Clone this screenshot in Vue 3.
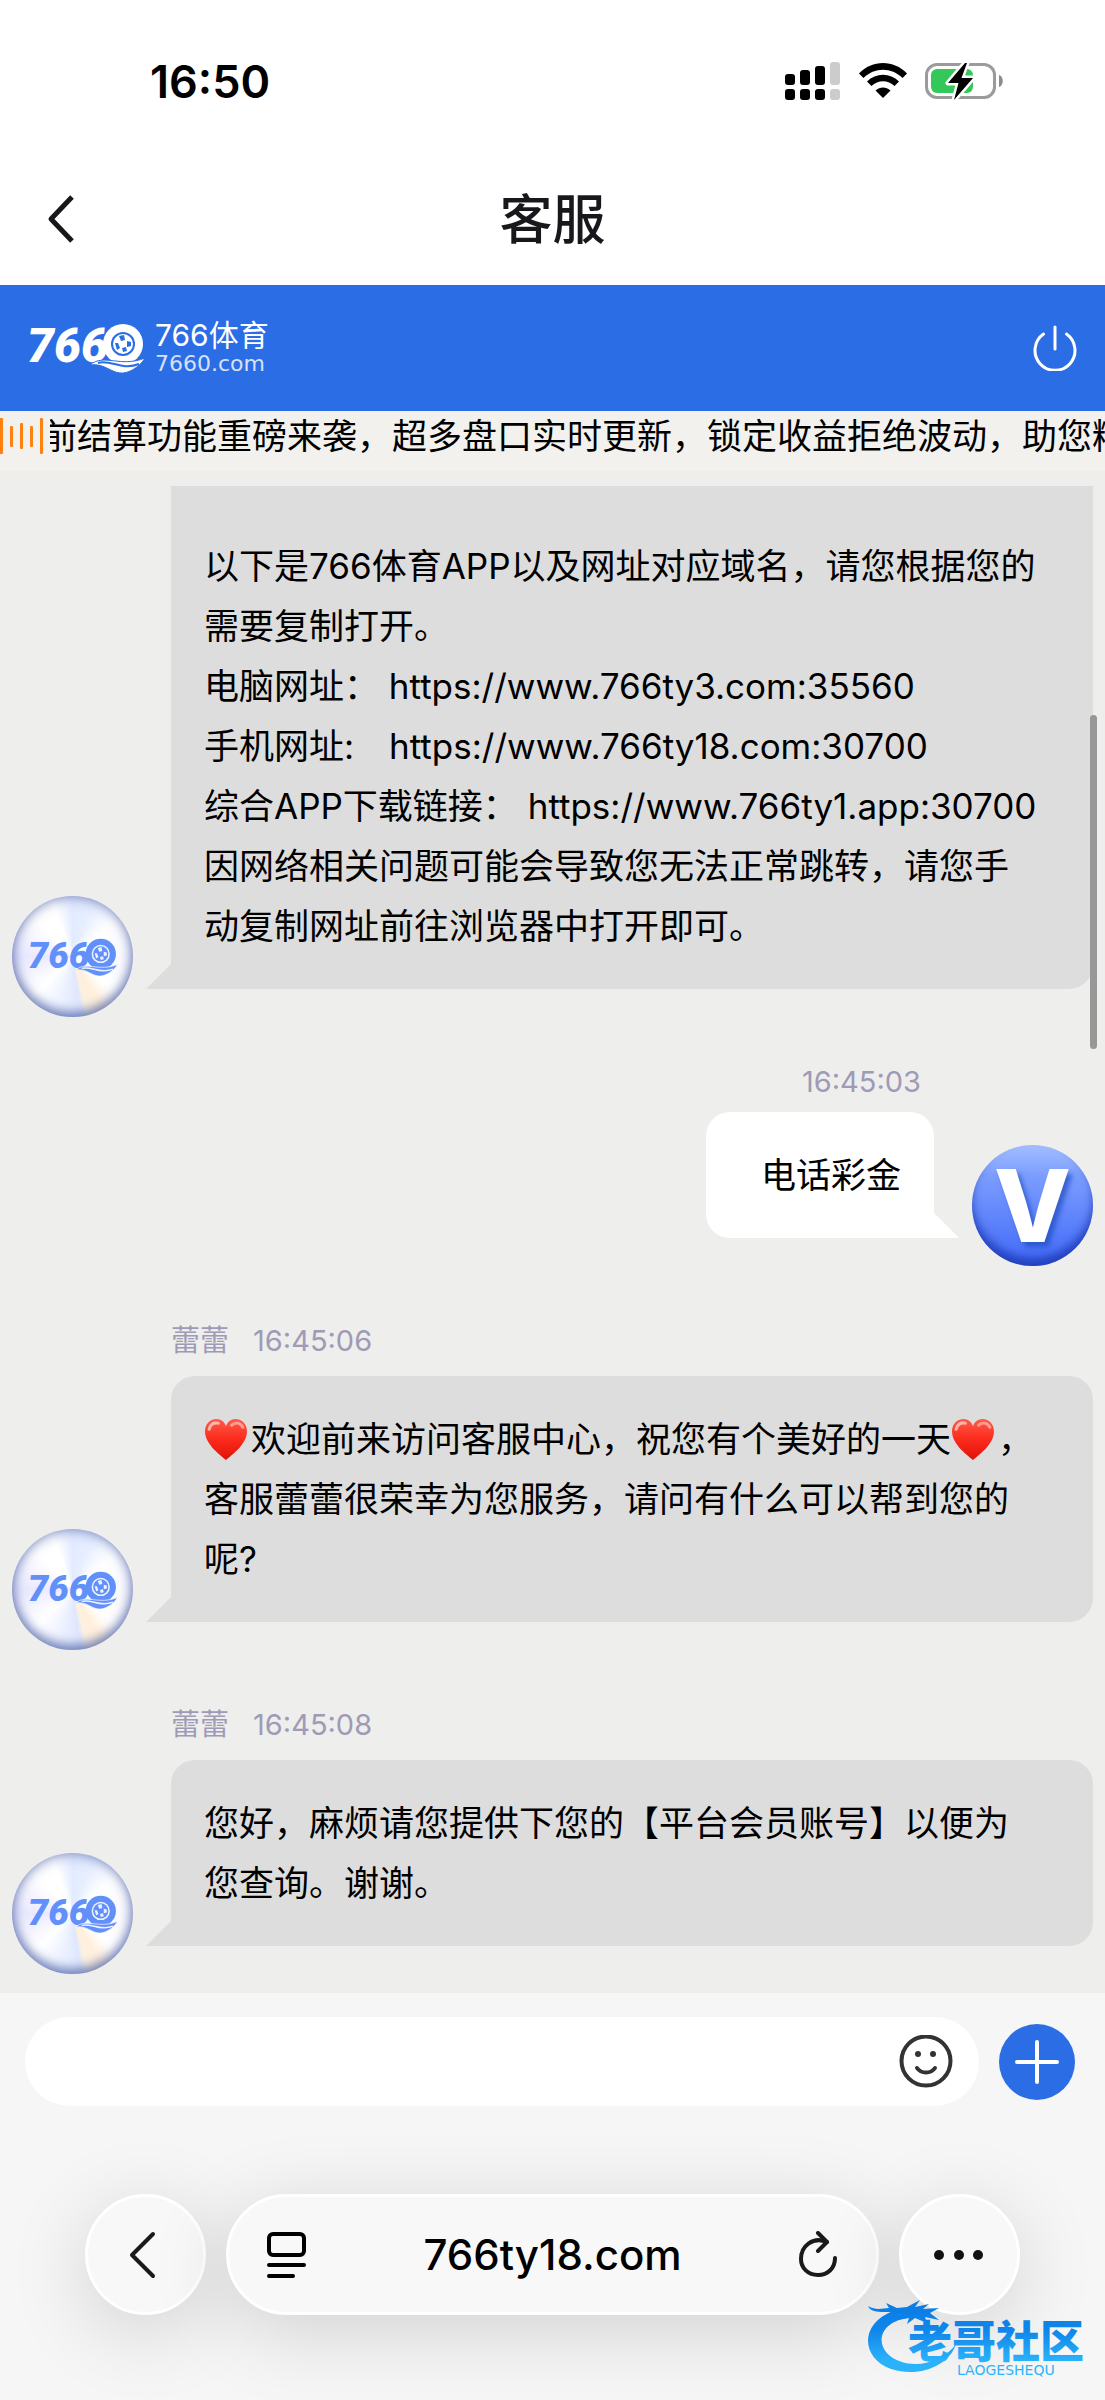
<template>
  <div class="phone">
    <svg class="defs" aria-hidden="true">
      <symbol id="heart" viewBox="0 0 43 42">
        <path fill="url(#heart-red)" d="M21.500 41C14 35 1 25 1 13C1 6 6 1 12 1C17 1 20 4 21.500 8C23 4 26 1 31 1C37 1 42 6 42 13C42 25 29 35 21.500 41Z" />
        <path d="M5 11C6 6 10 4 14 5" fill="none" stroke="#ffb5a8" stroke-width="3" stroke-linecap="round" />
        <path d="M27 7C31 3 36 5 38 9" fill="none" stroke="#ff9d90" stroke-width="3" stroke-linecap="round" />
      </symbol>
      <linearGradient id="heart-red" x1="0" y1="0" x2="0" y2="1">
        <stop offset="0" stop-color="#ff5a48" />
        <stop offset="0.5" stop-color="#fb2a1c" />
        <stop offset="1" stop-color="#e01208" />
      </linearGradient>
      <symbol id="ball-wave" viewBox="0 0 117 50">
        <circle class="mark-fill" cx="95" cy="21" r="20" />
        <circle class="mark-hole" cx="95" cy="21" r="12" />
        <circle class="mark-fill" cx="95" cy="21" r="10" />
        <path class="mark-hole" d="M91 13l5-1 1 5-4 1zM87 20l3 0 2 5-3 2zM99 18l4 1 0 4-4 1zM94 25l4-1 1 4-4 1z" />
        <path class="mark-wave" d="M62 42C76 30 92 45 117 35C112 44 100 51 92 50C82 49 76 40 62 42Z" />
        <path class="mark-line" d="M70 40C82 36 94 48 111 41" />
      </symbol>
    </svg>

    <div class="status-bar">
      <span class="clock">16:50</span>
      <div class="status-icons">
        <svg width="56" height="38" viewBox="0 0 56 38" aria-hidden="true">
          <rect x="0" y="12" width="10" height="11" rx="3" />
          <rect x="15" y="8" width="10" height="15" rx="3" />
          <rect x="30" y="4" width="10" height="19" rx="3" />
          <rect x="45" y="0" width="10" height="23" rx="3" fill="#ccc" />
          <rect x="0" y="27" width="10" height="11" rx="3" />
          <rect x="15" y="27" width="10" height="11" rx="3" />
          <rect x="30" y="27" width="10" height="11" rx="3" />
          <rect x="45" y="27" width="10" height="11" rx="3" fill="#ccc" />
        </svg>
        <svg width="48" height="36" viewBox="0 0 48 36" aria-hidden="true">
          <path d="M0 10.500C13-3.500 35-3.500 48 10.500L43.500 15C32.500 4 15.500 4 4.500 15Z" />
          <path d="M8 18.500C17 9.500 31 9.500 40 18.500L35.500 23C29 16.700 19 16.700 12.500 23Z" />
          <path d="M16.500 27.500C21 23.500 27 23.500 31.500 27.500L24 35Z" />
        </svg>
        <svg width="78" height="38" viewBox="0 0 78 38" aria-hidden="true">
          <rect x="1.500" y="2.500" width="68" height="33" rx="10.500" fill="none" stroke="#9b9b9b" stroke-width="3" />
          <path d="M74 13C79 14 79 24 74 25Z" fill="#8c8c8c" />
          <rect x="6" y="7" width="42" height="24" rx="6" fill="#34c759" />
          <path d="M40 1L23 21H33.500L29 38L48 16H36.500L42 1Z" stroke="#fff" stroke-width="5" stroke-linejoin="round" />
          <path d="M40 1L23 21H33.500L29 38L48 16H36.500L42 1Z" />
        </svg>
      </div>
    </div>

    <header class="title-bar">
      <button class="icon-btn title-back" type="button" aria-label="返回">
        <svg width="28" height="50" viewBox="0 0 28 50" aria-hidden="true">
          <path d="M26 2L5 24L26 46" fill="none" stroke="#17171c" stroke-width="5" stroke-linejoin="round" />
        </svg>
      </button>
      <h1>客服</h1>
    </header>

    <div class="brand-bar">
      <a class="brand" href="#" @click.prevent>
        <svg class="brand-mark" viewBox="0 0 117 50" aria-hidden="true">
          <text class="mark-digits" x="-1" y="39">766</text>
          <use href="#ball-wave" />
        </svg>
        <span class="brand-text">
          <span class="brand-name">766体育</span>
          <span class="brand-domain">7660.com</span>
        </span>
      </a>
      <button class="icon-btn" type="button" aria-label="退出">
        <svg width="44" height="46" viewBox="0 0 44 46" fill="none" stroke="#fff" stroke-width="3" stroke-linecap="round" aria-hidden="true">
          <path d="M22 2V24" />
          <path d="M10.500 9A20 20 0 1 0 33.500 9" />
        </svg>
      </button>
    </div>

    <div class="notice">
      <svg class="notice-icon" width="50" height="36" viewBox="0 0 50 36" fill="#ff8112" aria-hidden="true">
        <rect x="-1" y="0" width="4" height="36" rx="1" />
        <rect x="10" y="8" width="3" height="21" rx="1" />
        <rect x="20" y="5" width="3" height="26" rx="1" />
        <rect x="30" y="8" width="3" height="21" rx="1" />
        <rect x="40" y="0" width="3" height="36" rx="1" />
      </svg>
      <div class="notice-track">
        <p>{{ notice }}</p>
      </div>
    </div>

    <main class="chat">
      <article
        v-for="msg in messages"
        :key="msg.id"
        class="message"
        :class="[msg.from, { clipped: msg.clipped }]"
      >
        <div v-if="msg.time" class="meta">
          <span v-if="msg.name">{{ msg.name }}</span>
          <time>{{ msg.time }}</time>
        </div>
        <div class="row">
          <div class="avatar">
            <svg v-if="msg.from === 'agent'" class="avatar-mark" viewBox="0 0 117 50" aria-hidden="true">
              <text class="mark-digits" x="-1" y="39">766</text>
              <use href="#ball-wave" />
            </svg>
            <span v-else class="avatar-letter">V</span>
          </div>
          <div class="bubble">
            <p v-for="(line, i) in msg.lines" :key="i">
              <template v-for="(part, j) in line.split('❤')" :key="j">
                <svg v-if="j > 0" class="heart" role="img" aria-label="❤"><use href="#heart" /></svg>{{ part }}</template>
            </p>
          </div>
        </div>
      </article>
      <div class="scroll-thumb"></div>
    </main>

    <footer class="bottom">
      <form class="composer" @submit.prevent>
        <div class="field">
          <input v-model="draft" type="text" aria-label="输入消息" />
          <button class="icon-btn" type="button" aria-label="表情">
            <svg width="54" height="54" viewBox="0 0 54 54" fill="none" stroke="#333" stroke-width="4" stroke-linecap="round" aria-hidden="true">
              <circle cx="27" cy="26" r="24.500" />
              <path d="M18 33C22 39 32 39 36 33" />
              <circle cx="19" cy="19" r="3" fill="#333" stroke="none" />
              <circle cx="34" cy="19" r="3" fill="#333" stroke="none" />
            </svg>
          </button>
        </div>
        <button class="add-btn" type="button" aria-label="更多">
          <svg width="46" height="46" viewBox="0 0 46 46" stroke="#fff" stroke-width="4" stroke-linecap="round" aria-hidden="true">
            <path d="M23 3V43M3 23H43" />
          </svg>
        </button>
      </form>

      <nav class="browser-bar">
        <button class="glass round" type="button" aria-label="后退">
          <svg width="34" height="50" viewBox="0 0 34 50" fill="none" stroke="#1a1a1a" stroke-width="4" stroke-linecap="round" stroke-linejoin="round" aria-hidden="true">
            <path d="M24 4L3 25L24 46" />
          </svg>
        </button>
        <div class="glass address">
          <button class="icon-btn" type="button" aria-label="页面菜单">
            <svg width="40" height="48" viewBox="0 0 40 48" fill="none" stroke="#000" stroke-width="4" stroke-linecap="round" aria-hidden="true">
              <rect x="2" y="3" width="35" height="21" rx="4" />
              <path d="M2 34H37M2 45H26" />
            </svg>
          </button>
          <a href="#" @click.prevent>766ty18.com</a>
          <button class="icon-btn" type="button" aria-label="重新载入">
            <svg width="40" height="48" viewBox="0 0 40 48" fill="none" stroke="#1a1a1a" stroke-width="4" stroke-linecap="round" stroke-linejoin="round" aria-hidden="true">
              <path d="M29 11C15 5 3 15 3 28C3 37 10 44 20 44C30 44 37 37 37 27" />
              <path d="M20 2L29 11L20 20" />
            </svg>
          </button>
        </div>
        <button class="glass round" type="button" aria-label="更多选项">
          <svg width="52" height="12" viewBox="0 0 52 12" fill="#111" aria-hidden="true">
            <circle cx="5" cy="6" r="5" />
            <circle cx="25" cy="6" r="5" />
            <circle cx="44" cy="6" r="5" />
          </svg>
        </button>
      </nav>

      <div class="watermark">
        <svg width="222" height="80" viewBox="0 0 222 80" aria-hidden="true">
          <defs>
            <linearGradient id="wm-blue" x1="0" y1="0" x2="0" y2="76" gradientUnits="userSpaceOnUse">
              <stop offset="0" stop-color="#0a7be4" />
              <stop offset="0.400" stop-color="#0f86ea" />
              <stop offset="0.800" stop-color="#2ab2fb" />
            </linearGradient>
          </defs>
          <g fill="url(#wm-blue)">
            <path d="M26 11C-8 24-6 58 24 69C52 78 82 66 89 44C78 60 54 68 35 62C8 54 6 24 40 18Z" />
            <path d="M1 6C10 11 15 8 22 8L19 3L30 8L40 7L53 0L48 7L62 4L56 9L72 8L63 13L72 20L58 17L60 23L48 18L40 24L42 18L30 20L34 15L22 12C14 12 4 13 1 6Z" />
            <text class="wm-name" x="41" y="58">老哥社区</text>
            <text class="wm-latin" x="90" y="75">LAOGESHEQU</text>
          </g>
        </svg>
      </div>
    </footer>
  </div>
</template>

<script setup>
import { ref } from 'vue';

const draft = ref('');

const notice = '前结算功能重磅来袭，超多盘口实时更新，锁定收益拒绝波动，助您精准把握';

const messages = [
  {
    id: 1,
    from: 'agent',
    clipped: true,
    lines: [
      '以下是766体育APP以及网址对应域名，请您根据您的需要复制打开。',
      '电脑网址： https://www.766ty3.com:35560',
      '手机网址:\u3000https://www.766ty18.com:30700',
      '综合APP下载链接： https://www.766ty1.app:30700',
      '因网络相关问题可能会导致您无法正常跳转，请您手动复制网址前往浏览器中打开即可。'
    ]
  },
  {
    id: 2,
    from: 'user',
    time: '16:45:03',
    lines: ['电话彩金']
  },
  {
    id: 3,
    from: 'agent',
    name: '蕾蕾',
    time: '16:45:06',
    lines: ['❤欢迎前来访问客服中心，祝您有个美好的一天❤，客服蕾蕾很荣幸为您服务，请问有什么可以帮到您的呢?']
  },
  {
    id: 4,
    from: 'agent',
    name: '蕾蕾',
    time: '16:45:08',
    lines: ['您好，麻烦请您提供下您的【平台会员账号】以便为您查询。谢谢。']
  }
];
</script>

<style>
body {
  margin: 0;
  background: #f5f5f5;
}
</style>

<style scoped>
.phone {
  min-height: 100vh;
  display: flex;
  flex-direction: column;
  overflow: hidden;
  background: #f5f5f5;
  color: #000;
  font-family: Inter, 'Noto Sans CJK SC', sans-serif;
  font-size: 35px;
}

p,
h1 {
  margin: 0;
}

button {
  padding: 0;
  border: none;
  background: none;
  font: inherit;
  cursor: pointer;
}

svg {
  display: block;
  flex: none;
}

.defs {
  position: absolute;
  width: 0;
  height: 0;
}

.icon-btn {
  display: flex;
  align-items: center;
  justify-content: center;
}

.mark-digits {
  font-family: Roboto, sans-serif;
  font-size: 48px;
  font-weight: 900;
  font-style: italic;
  fill: currentColor;
}

.mark-fill {
  fill: currentColor;
}

.mark-hole {
  fill: var(--hole);
}

.mark-wave {
  fill: currentColor;
  stroke: var(--hole);
  stroke-width: 1;
}

.mark-line {
  fill: none;
  stroke: var(--hole);
  stroke-width: 2;
}

.status-bar {
  display: flex;
  align-items: center;
  justify-content: space-between;
  height: 154px;
  padding: 8px 102px 0 150px;
  box-sizing: border-box;
  background: #fff;
}

.clock {
  font-size: 45px;
  font-weight: 600;
}

.status-icons {
  display: flex;
  align-items: center;
  gap: 18px;
}

.title-bar {
  display: grid;
  grid-template-columns: 60px 1fr 60px;
  align-items: center;
  height: 131px;
  padding: 0 30px;
  background: #fff;
}

.title-back {
  height: 60px;
}

.title-bar h1 {
  color: #17171c;
  font-size: 53px;
  line-height: 60px;
  font-weight: 500;
  text-align: center;
}

.brand-bar {
  display: flex;
  align-items: center;
  justify-content: space-between;
  height: 126px;
  padding: 0 28px;
  background: #2b6de5;
}

.brand {
  display: flex;
  align-items: center;
  gap: 10px;
  color: #fff;
  text-decoration: none;
}

.brand-mark {
  --hole: #2b6de5;
  width: 117px;
  height: 50px;
  overflow: visible;
}

.brand-text {
  display: flex;
  flex-direction: column;
}

.brand-name {
  font-size: 30px;
  line-height: 32px;
}

.brand-domain {
  font-family: 'DejaVu Sans', sans-serif;
  font-size: 22px;
  line-height: 26px;
  opacity: 0.8;
}

.notice {
  display: flex;
  align-items: center;
  height: 50px;
  padding-bottom: 10px;
  background: #f3f1ee;
}

.notice-track {
  flex: 1;
  min-width: 0;
  overflow: hidden;
}

.notice-track p {
  margin-left: -8px;
  line-height: 50px;
  white-space: nowrap;
}

.chat {
  position: relative;
  display: flex;
  flex-direction: column;
  gap: 45px;
  padding: 15px 12px 19px;
  background: #eeeeec;
}

.meta {
  display: flex;
  gap: 24px;
  padding: 10px 0 15px 159px;
  color: #9f9ab5;
  font-size: 29px;
  line-height: 40px;
}

.row {
  display: flex;
  align-items: flex-end;
  gap: 38px;
}

.avatar {
  display: flex;
  flex: none;
  align-items: center;
  justify-content: center;
  width: 121px;
  height: 121px;
  border-radius: 50%;
}

.agent .avatar {
  background: conic-gradient(#e3ebff 0deg, #e6eeff 20deg, #fff 50deg, #fbfbff 90deg, #fff 130deg, #fff0dc 150deg, #fdf0e0 165deg, #dfe7fe 172deg, #eaf0ff 190deg, #fff 225deg, #eaeaff 270deg, #fff 315deg, #fff 340deg, #e3ebff 360deg);
  box-shadow: inset 0 0 14px rgba(62, 84, 160, 0.7), inset 0 -6px 10px rgba(62, 84, 160, 0.4);
}

.avatar-mark {
  --hole: #eef2ff;
  width: 90px;
  height: 38px;
  overflow: visible;
  color: #6290fb;
}

.user .avatar {
  background: linear-gradient(#a3bfff, #7b9dff 25%, #4169f8);
  box-shadow: inset 0 -8px 8px rgba(22, 48, 165, 0.7);
}

.avatar-letter {
  color: #fff;
  font-size: 100px;
  font-weight: 800;
  line-height: 121px;
  text-shadow: 4px 5px 5px rgba(30, 75, 190, 0.7);
}

.bubble {
  position: relative;
  flex: 1;
  margin-bottom: 28px;
  padding: 33px 54px 33px 33px;
  border-radius: 24px 24px 24px 0;
  background: #ddd;
}

.bubble::after {
  content: '';
  position: absolute;
  bottom: 0;
  left: -25px;
  border-bottom: 25px solid #ddd;
  border-left: 25px solid transparent;
}

.bubble p {
  line-height: 60px;
  overflow-wrap: break-word;
}

.clipped .bubble {
  padding-top: 50px;
  border-radius: 0 0 24px 0;
}

.user .meta {
  justify-content: flex-end;
  padding: 0 172px 10px 0;
}

.user .row {
  flex-direction: row-reverse;
}

.user .bubble {
  flex: none;
  padding: 33px 33px 33px 55px;
  border-radius: 24px 24px 0 24px;
  background: #fff;
}

.user .bubble::after {
  right: -25px;
  left: auto;
  border-right: 25px solid transparent;
  border-bottom-color: #fff;
  border-left: none;
}

.heart {
  display: inline-block;
  width: 44px;
  height: 43px;
  margin-right: 3px;
  vertical-align: -9px;
}

.scroll-thumb {
  position: absolute;
  top: 244px;
  right: 8px;
  width: 7px;
  height: 334px;
  border-radius: 4px;
  background: #979797;
}

.bottom {
  position: relative;
  flex: 1;
  padding-bottom: 85px;
  background: #f6f6f6;
}

.composer {
  display: flex;
  align-items: center;
  gap: 20px;
  padding: 24px 30px 0 25px;
}

.field {
  display: flex;
  flex: 1;
  align-items: center;
  height: 89px;
  padding: 0 26px 0 40px;
  border-radius: 45px;
  box-sizing: border-box;
  background: #fff;
}

.field input {
  flex: 1;
  min-width: 0;
  border: none;
  outline: none;
  background: none;
  font: inherit;
}

.add-btn {
  display: flex;
  flex: none;
  align-items: center;
  justify-content: center;
  width: 76px;
  height: 76px;
  border-radius: 50%;
  background: #2b6de5;
}

.browser-bar {
  display: flex;
  gap: 20px;
  padding: 88px 85px 0;
}

.glass {
  display: flex;
  align-items: center;
  height: 121px;
  border: 3px solid #fff;
  border-radius: 61px;
  box-sizing: border-box;
  background: #f8f8f8;
  box-shadow: 0 16px 80px rgba(0, 0, 0, 0.15);
}

.round {
  flex: none;
  justify-content: center;
  width: 121px;
}

.address {
  flex: 1;
  justify-content: space-between;
  padding: 0 38px;
}

.address a {
  color: #000;
  font-size: 42px;
  font-weight: 500;
  text-decoration: none;
}

.watermark {
  position: absolute;
  right: 16px;
  bottom: 20px;
}

.wm-name {
  font-family: 'Noto Sans CJK SC', sans-serif;
  font-size: 44px;
  font-weight: 900;
}

.wm-latin {
  font-family: 'DejaVu Sans', sans-serif;
  font-size: 14px;
}
</style>
